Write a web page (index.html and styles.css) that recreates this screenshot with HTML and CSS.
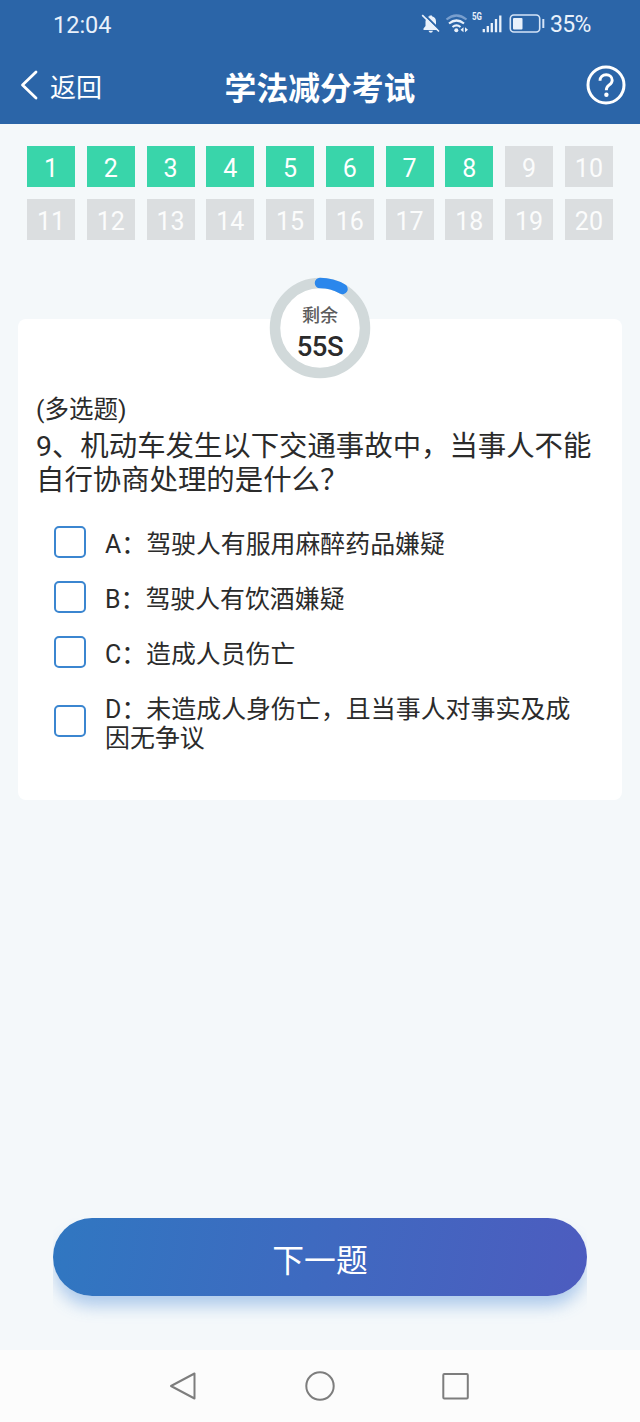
FILE: index.html
```html
<!DOCTYPE html>
<html lang="zh-CN">
<head>
    <meta charset="UTF-8">
    <meta name="viewport" content="width=device-width, initial-scale=1.0">
    <title>学法减分考试</title>
    <link rel="stylesheet" href="styles.css">
</head>
<body>
    <header class="header">
        <div class="status-bar">
            <span class="time">12:04</span>
            <div class="status-icons">
                <svg class="status-svg" width="125" height="24" viewBox="0 0 125 24">
                    <!-- bell off -->
                    <path d="M2.500 18v-1.500l2-2.500v-4.500c0-3 2-5 4-5.300v-.7h2.500v.7c2.500.500 4 2.500 4 5.300v4.500l2 2.500v1.500z" fill="#e9f1fb"/>
                    <path d="M7.500 18.800h4.500q-.500 2-2.200 2t-2.300-2z" fill="#e9f1fb"/>
                    <path d="M2.500 1.800l17 17" stroke="#2b65a8" stroke-width="2"/>
                    <path d="M1.200 3.200l16.800 16.300" stroke="#e9f1fb" stroke-width="1.700"/>
                    <!-- wifi -->
                    <g fill="none" stroke="#e9f1fb" stroke-width="2.200">
                        <path d="M25.500 7.500q10-8 20 0" stroke="#799fce"/>
                        <path d="M28 11.500q7.500-6 15 0"/>
                        <path d="M31.500 15q4-3.200 8 0"/>
                    </g>
                    <circle cx="35.300" cy="18.300" r="2" fill="#e9f1fb"/>
                    <path d="M42.500 15.200v5l-3-2.500zM44 15.200v5l3-2.500z" fill="#e9f1fb"/>
                    <!-- signal -->
                    <path d="M62.800 17v3.200M66.800 14v6.200M70.800 11v9.200M75 7v13.200M79.300 3.500v16.700" stroke="#e9f1fb" stroke-width="2.300"/>
                    <!-- battery -->
                    <rect x="89.300" y="3" width="29.400" height="17" rx="3.500" fill="none" stroke="#d5e4f7" stroke-width="1.600"/>
                    <rect x="92" y="6" width="9.500" height="11.500" rx="1" fill="#e9f1fb"/>
                    <path d="M122.300 7v9" stroke="#d5e4f7" stroke-width="2"/>
                </svg>
                <span class="network">5G</span>
                <span class="battery">35%</span>
            </div>
        </div>
        <nav class="nav-bar">
            <a class="back">
                <svg width="18" height="30" viewBox="0 0 18 30"><path d="M16 2L2.500 15 16 28" fill="none" stroke="#fff" stroke-width="2.800" stroke-linecap="round" stroke-linejoin="round"/></svg>
                <span>返回</span>
            </a>
            <h1 class="title">学法减分考试</h1>
            <svg class="help" width="40" height="40" viewBox="0 0 40 40">
                <circle cx="20" cy="20" r="18" fill="none" stroke="#fff" stroke-width="3"/>
                <path d="M14 15.800c0-4 2.800-6 6.200-6s6 2.200 6 5.400c0 2.500-1.500 3.700-3.200 5-2 1.500-2.700 2.200-2.700 5.100" fill="none" stroke="#fff" stroke-width="2.900"/>
                <circle cx="20.400" cy="29.700" r="2.200" fill="#fff"/>
            </svg>
        </nav>
    </header>

    <main class="content">
        <div class="number-grid">
            <span class="number done">1</span>
            <span class="number done">2</span>
            <span class="number done">3</span>
            <span class="number done">4</span>
            <span class="number done">5</span>
            <span class="number done">6</span>
            <span class="number done">7</span>
            <span class="number done">8</span>
            <span class="number">9</span>
            <span class="number">10</span>
            <span class="number">11</span>
            <span class="number">12</span>
            <span class="number">13</span>
            <span class="number">14</span>
            <span class="number">15</span>
            <span class="number">16</span>
            <span class="number">17</span>
            <span class="number">18</span>
            <span class="number">19</span>
            <span class="number">20</span>
        </div>

        <section class="card">
            <div class="timer">
                <svg class="timer-ring" width="102" height="102" viewBox="0 0 102 102">
                    <circle cx="51" cy="51" r="45" fill="#fff" stroke="#d1d9da" stroke-width="10.500"/>
                    <path d="M51 6A45 45 0 0 1 73.500 12" fill="none" stroke="#2b87ec" stroke-width="10.500" stroke-linecap="round"/>
                </svg>
                <span class="timer-label">剩余</span>
                <span class="timer-value">55S</span>
            </div>
            <p class="question-type">(多选题)</p>
            <p class="question">9、机动车发生以下交通事故中，当事人不能<br>自行协商处理的是什么？</p>
            <div class="options">
                <label class="option"><input type="checkbox"><span>A：驾驶人有服用麻醉药品嫌疑</span></label>
                <label class="option"><input type="checkbox"><span>B：驾驶人有饮酒嫌疑</span></label>
                <label class="option"><input type="checkbox"><span>C：造成人员伤亡</span></label>
                <label class="option"><input type="checkbox"><span>D：未造成人身伤亡，且当事人对事实及成<br>因无争议</span></label>
            </div>
        </section>

        <button class="next" type="button">下一题</button>
    </main>

    <footer class="system-nav">
        <svg width="30" height="32" viewBox="0 0 30 32"><path d="M26.500 3.500v25L3 16z" fill="none" stroke="#7d7d7d" stroke-width="2" stroke-linejoin="round"/></svg>
        <svg width="32" height="32" viewBox="0 0 32 32"><circle cx="16" cy="16" r="13.700" fill="none" stroke="#7d7d7d" stroke-width="2"/></svg>
        <svg width="30" height="32" viewBox="0 0 30 32"><rect x="1.300" y="4" width="24.500" height="24.500" rx="1" fill="none" stroke="#7d7d7d" stroke-width="2"/></svg>
    </footer>
</body>
</html>
```

FILE: styles.css
```css
* {
    box-sizing: border-box;
}
body {
    margin: 0;
    height: 1422px;
    display: flex;
    flex-direction: column;
    font-family: Roboto, "Noto Sans CJK SC", sans-serif;
    background-color: #f4f8fa;
    color: #2b2b2b;
}
.header {
    height: 124px;
    background-color: #2b65a8;
    color: #fff;
}
.status-bar {
    height: 48px;
    padding: 1px 50px 0 53px;
    display: flex;
    align-items: center;
    justify-content: space-between;
    color: #e9f1fb;
}
.time {
    font-size: 23.5px;
}
.status-icons {
    position: relative;
    display: flex;
    align-items: center;
    gap: 4px;
}
.status-svg {
    margin-top: -1px;
}
/* sits over the empty corner of the signal bars */
.network {
    position: absolute;
    left: 51px;
    top: 1px;
    font-size: 10.5px;
    line-height: 10px;
    font-weight: 700;
    transform: scaleX(0.75);
    transform-origin: left;
}
.battery {
    font-size: 23px;
    letter-spacing: -0.7px;
    margin-right: -0.7px;
}
.nav-bar {
    height: 76px;
    padding: 0 14px 0 20px;
    display: grid;
    grid-template-columns: 1fr auto 1fr;
    align-items: center;
}
.back {
    display: flex;
    align-items: center;
    gap: 12px;
    font-size: 26px;
    line-height: 30px;
}
.back svg {
    margin-top: -2px;
}
.back span {
    padding-top: 3px;
}
.title {
    margin: 5px 6px 0 0;
    font-size: 31.8px;
    font-weight: 700;
    line-height: 40px;
}
.help {
    justify-self: end;
    margin-top: -2px;
}
.content {
    height: 1226px;
    padding: 22px 18px 0;
    display: flex;
    flex-direction: column;
}
.number-grid {
    margin: 0 9px;
    display: grid;
    grid-template-columns: repeat(10, 48px);
    grid-auto-rows: 41px;
    justify-content: space-between;
    row-gap: 12px;
}
.number {
    display: flex;
    align-items: center;
    justify-content: center;
    padding-top: 4px;
    background-color: #dbdee0;
    color: #fbfcfc;
    font-size: 25px;
}
.number.done {
    background-color: #39d5aa;
    color: #fff;
}
.card {
    margin-top: 79px;
    height: 481px;
    padding: 0 18px;
    border-radius: 8px;
    background-color: #fff;
}
.timer {
    position: relative;
    width: 102px;
    height: 102px;
    margin: -42px auto 0;
    padding-top: 26px;
    display: flex;
    flex-direction: column;
    align-items: center;
}
.timer-ring {
    position: absolute;
    left: 0;
    top: 0;
}
.timer-label,
.timer-value {
    position: relative;
}
.timer-label {
    font-size: 18px;
    line-height: 26px;
    font-weight: 500;
    color: #5c5c5c;
}
.timer-value {
    font-size: 27.5px;
    line-height: 36px;
    font-weight: 500;
    letter-spacing: -0.4px;
}
.question-type {
    margin: 15px 0 0;
    font-size: 24.5px;
    line-height: 32px;
}
.question {
    margin: 4px 0 0;
    font-size: 28.4px;
    line-height: 34px;
    white-space: nowrap;
}
.options {
    margin-top: 19px;
    padding-left: 18px;
}
.option {
    display: flex;
    align-items: center;
    gap: 19px;
    min-height: 55px;
    font-size: 24.9px;
    line-height: 29px;
    white-space: nowrap;
}
.option:last-child {
    padding-top: 13px;
}
.option:last-child span {
    letter-spacing: 0.05px;
}
.option input {
    appearance: none;
    flex: none;
    width: 32px;
    height: 32px;
    margin: 0 0 6px;
    border: 2px solid #3b86d0;
    border-radius: 5px;
    background-color: #fff;
}
.next {
    margin: 418px 35px 0;
    height: 78px;
    padding: 7px 0 0;
    border: none;
    border-radius: 39px;
    background: linear-gradient(100deg, #3077c1, #4d5cbf);
    box-shadow: 0 12px 16px -2px rgba(70, 135, 215, 0.4);
    clip-path: inset(0 0 -30px 0);
    color: #fff;
    font-family: inherit;
    font-size: 31.8px;
    line-height: 40px;
}
.system-nav {
    height: 72px;
    padding: 0 168px;
    display: flex;
    align-items: center;
    justify-content: space-between;
    background-color: #fcfcfc;
}
```
